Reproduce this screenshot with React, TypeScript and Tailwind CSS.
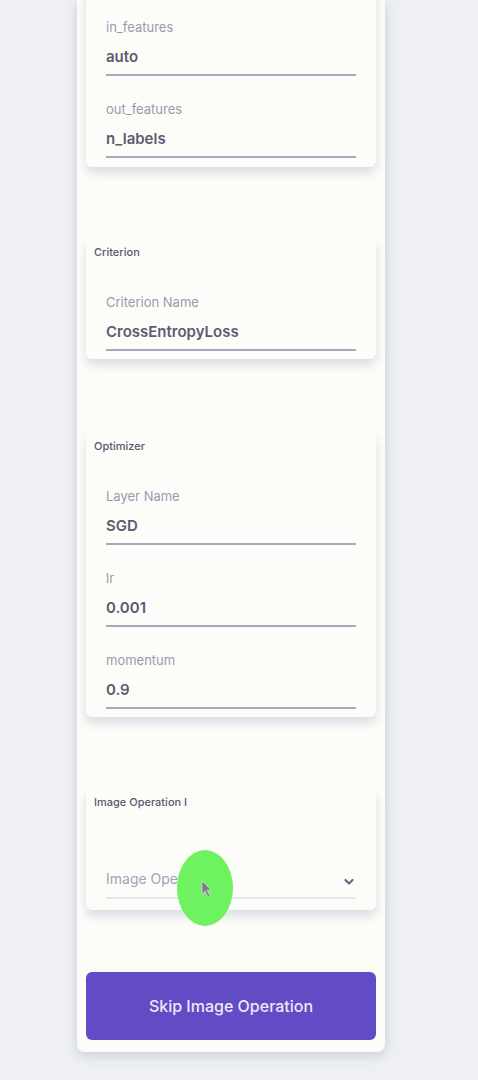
import React from 'react';

type FieldProps = { label: string; value: string };

const Field: React.FC<FieldProps> = ({ label, value }) => (
  <div className="flex flex-col">
    <span className="text-[13px] leading-[18px] text-[#9b99ad]">{label}</span>
    <span className="mt-[10px] text-[15px] leading-[22px] font-semibold text-[#5d5b72]">{value}</span>
    <div className="mt-[6px] h-[2px] bg-[#a9a6bf]" />
  </div>
);

const Card: React.FC<{ title?: string; className?: string; children: React.ReactNode }> = ({
  title,
  className = '',
  children,
}) => (
  <div className={`rounded-md bg-[#fcfdf9] shadow-[0_6px_10px_rgba(180,182,200,0.45)] ${className}`}>
    {title && (
      <div className="px-2 pt-[6px] text-[11px] leading-[16px] font-medium text-[#5a586e]">{title}</div>
    )}
    {children}
  </div>
);

const App: React.FC = () => {
  return (
    <div
      className="min-h-[1080px] bg-[#eef0f4] overflow-hidden"
      style={{ fontFamily: 'Inter, "Noto Sans", sans-serif' }}
    >
      <div className="relative ml-[77px] flex w-[308px] flex-col rounded-b-lg bg-[#fcfdf9] px-[9px] pb-[12px] shadow-[0_4px_12px_rgba(170,172,190,0.5)]">
        <Card className="-mt-[12px]">
          <div className="flex flex-col gap-[24px] px-5 pt-[30px] pb-[9px]">
            <Field label="in_features" value="auto" />
            <Field label="out_features" value="n_labels" />
          </div>
        </Card>

        <Card title="Criterion" className="mt-[71px]">
          <div className="flex flex-col gap-[24px] px-5 pt-[33px] pb-[8px]">
            <Field label="Criterion Name" value="CrossEntropyLoss" />
          </div>
        </Card>

        <Card title="Optimizer" className="mt-[73px]">
          <div className="flex flex-col gap-[24px] px-5 pt-[33px] pb-[8px]">
            <Field label="Layer Name" value="SGD" />
            <Field label="lr" value="0.001" />
            <Field label="momentum" value="0.9" />
          </div>
        </Card>

        <Card title="Image Operation I" className="mt-[71px]">
          <div className="px-5 pt-[59px] pb-[11px]">
            <div className="flex items-center justify-between border-b-2 border-[#e6e6ec] pb-[8px]">
              <span className="text-[14px] leading-[20px] text-[#a3a1b4]">Image Operation</span>
              <svg width="10" height="8" viewBox="0 0 10 8" className="mr-[2px] mt-[6px]">
                <path d="M1.5 2 L5 5.5 L8.5 2" fill="none" stroke="#6b6880" strokeWidth="2.2" strokeLinecap="round" strokeLinejoin="round" />
              </svg>
            </div>
          </div>
        </Card>

        <button
          type="button"
          className="mt-[62px] h-[68px] w-full rounded-md bg-[#634bc6] text-[16px] font-medium text-[#ebe9f5]"
        >
          Skip Image Operation
        </button>

        <div className="absolute left-[100px] top-[850px] h-[76px] w-[56px] rounded-[50%] bg-[#6ef260]">
          <svg width="12" height="18" viewBox="0 0 12 18" className="absolute left-[24px] top-[30px]">
            <path d="M1 1 L1 14 L4 11 L7 17 L9 16 L6 10 L10 10 Z" fill="#7a7a86" stroke="#cfd0d6" strokeWidth="0.8" />
          </svg>
        </div>
      </div>
    </div>
  );
};

export default App;
